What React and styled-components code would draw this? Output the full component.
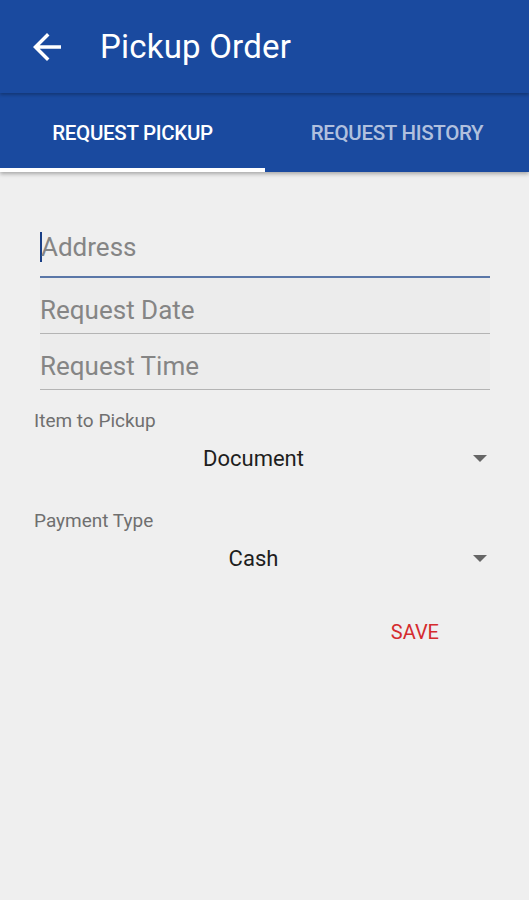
import React from "react";
import styled, { createGlobalStyle } from "styled-components";

const Global = createGlobalStyle`
  html, body {
    margin: 0;
    padding: 0;
    background: #efefef;
  }
  body {
    font-family: Roboto, "Noto Sans", sans-serif;
  }
`

const Page = styled.div`
  width: 529px;
  min-height: 900px;
  background: #efefef;
`

const AppBar = styled.header`
  height: 93px;
  background: #1a4a9f;
  display: flex;
  align-items: center;
  padding-left: 26px;
  box-sizing: border-box;
  position: relative;
  z-index: 2;
  box-shadow: 0 2px 3px rgba(0, 0, 0, 0.25);
  .title {
    margin-left: 32px;
    font-size: 33px;
    color: #fff;
    letter-spacing: 0.2px;
  }
`

const TabBar = styled.nav`
  height: 79px;
  background: #1a4a9f;
  display: grid;
  grid-template-columns: 265px 1fr;
  box-shadow: 0 2px 4px rgba(0, 0, 0, 0.3);
  position: relative;
  z-index: 1;
`

const Tab = styled.div`
  display: flex;
  align-items: center;
  justify-content: center;
  font-size: 20.5px;
  font-weight: 500;
  color: ${props => props.active ? "#fff" : "rgba(255,255,255,0.68)"};
  border-bottom: 4px solid ${props => props.active ? "#fff" : "transparent"};
  padding-top: 4px;
  box-sizing: border-box;
  letter-spacing: -0.3px;
`

const Form = styled.section`
  padding: 52px 39px 0 40px;
`

const Field = styled.div`
  height: ${props => props.first ? "54px" : "56px"};
  display: flex;
  align-items: center;
  position: relative;
  border-bottom: ${props => props.focused ? "2.5px solid #5a77a8" : "1.5px solid #b4b4b4"};
  background: ${props => props.focused ? "transparent" : "#ececec"};
  font-size: 26px;
  color: #858585;
  padding: ${props => props.first ? "0 0 6px" : "8px 0 0"};
  box-sizing: border-box;
  .cursor {
    width: 2px;
    height: 30px;
    background: #1a3f86;
    margin-right: -1px;
  }
`

const Spinner = styled.div`
  padding: 0 39px 0 34px;
  margin-top: ${props => props.gap}px;
  .label {
    font-size: 19px;
    color: #6f6f6f;
    height: 22px;
    line-height: 22px;
  }
  .row {
    display: flex;
    align-items: center;
    height: 30px;
    margin-top: 11px;
  }
  .value {
    flex: 1;
    text-align: center;
    font-size: 22px;
    color: #1e1e1e;
  }
  .arrow {
    width: 0;
    height: 0;
    border-left: 7px solid transparent;
    border-right: 7px solid transparent;
    border-top: 7px solid #666;
    margin-right: 3px;
  }
`

const Actions = styled.div`
  display: flex;
  justify-content: flex-end;
  padding-right: 90px;
  margin-top: 47px;
  button {
    background: none;
    border: none;
    font-family: inherit;
    font-size: 20px;
    color: #d52b2e;
    padding: 0;
  }
`

function BackArrow() {
  return (
    <svg width="42" height="42" viewBox="0 0 24 24">
      <path d="M20 11H7.830l5.590-5.590L12 4l-8 8 8 8 1.410-1.410L7.830 13H20v-2z" fill="#fff" />
    </svg>
  )
}

export default function App() {
  return (
    <Page>
      <Global />
      <AppBar>
        <BackArrow />
        <span className="title">Pickup Order</span>
      </AppBar>
      <TabBar>
        <Tab active>REQUEST PICKUP</Tab>
        <Tab>REQUEST HISTORY</Tab>
      </TabBar>
      <Form>
        <Field first focused><span className="cursor" />Address</Field>
        <Field>Request Date</Field>
        <Field>Request Time</Field>
      </Form>
      <Spinner gap={20}>
        <div className="label">Item to Pickup</div>
        <div className="row">
          <span className="value">Document</span>
          <span className="arrow" />
        </div>
      </Spinner>
      <Spinner gap={37}>
        <div className="label">Payment Type</div>
        <div className="row">
          <span className="value">Cash</span>
          <span className="arrow" />
        </div>
      </Spinner>
      <Actions>
        <button>SAVE</button>
      </Actions>
    </Page>
  )
}
